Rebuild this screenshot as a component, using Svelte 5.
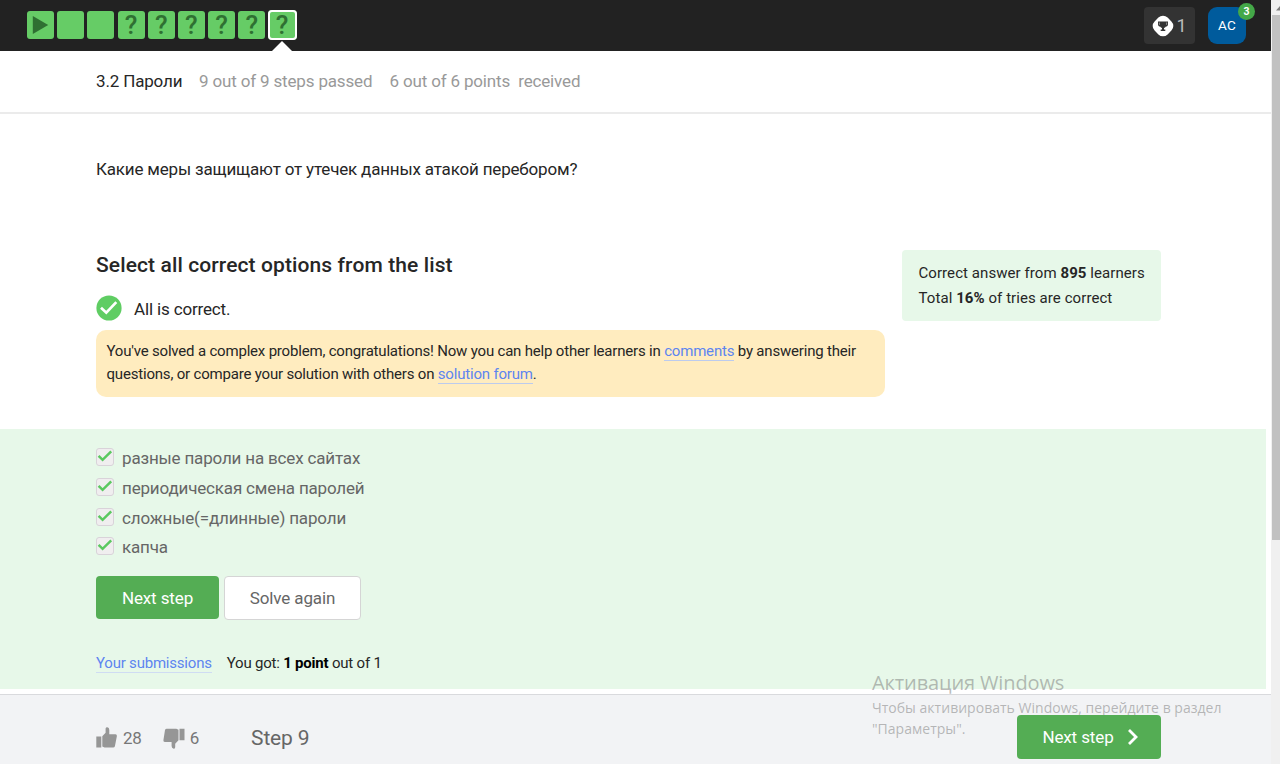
<script>
  const steps = ['play', 'text', 'text', 'quiz', 'quiz', 'quiz', 'quiz', 'quiz', 'quiz'];
  const current = 8;
  const options = [
    'разные пароли на всех сайтах',
    'периодическая смена паролей',
    'сложные(=длинные) пароли',
    'капча'
  ];
</script>

<div class="window">
  <div class="page">
    <header>
      <nav>
        {#each steps as kind, i}
          <div class="step" class:active={i === current}>
            {#if kind === 'play'}
              <svg width="17" height="20" viewBox="0 0 17 20"><path d="M.8 1 16.200 10 .8 19Z" fill="#2f7032" /></svg>
            {:else if kind === 'quiz'}
              <span>?</span>
            {/if}
          </div>
        {/each}
      </nav>
      <div class="score">
        <svg width="22" height="22" viewBox="0 0 22 22">
          <rect x="1.800" y="1.800" width="18.400" height="18.400" rx="6.500" transform="rotate(45 11 11)" fill="#fff" />
          <path d="M6 6.500h10v2.700c0 1.500-1 2.300-2.100 2.400-.5.800-1.100 1.200-1.900 1.400v1.600h1.300v1.500H8.700v-1.500H10v-1.600c-.8-.2-1.400-.6-1.900-1.400C7 11.500 6 10.700 6 9.200Z" fill="#333" />
          <path d="M6.900 7.600h.7v2.500c-.5-.1-.7-.5-.7-1Zm7.500 0h.7v1.500c0 .5-.2.900-.7 1Z" fill="#bbb" />
        </svg>
        <span>1</span>
      </div>
      <div class="avatar">AC<b>3</b></div>
    </header>

    <div class="lesson">
      <span class="title">3.2 Пароли</span>
      <span class="passed">9 out of 9 steps passed</span>
      <span class="points">6 out of 6 points&nbsp; received</span>
    </div>

    <main>
      <p class="question">Какие меры защищают от утечек данных атакой перебором?</p>
      <div class="columns">
        <section>
          <h2>Select all correct options from the list</h2>
          <div class="verdict">
            <svg width="26" height="26" viewBox="0 0 26 26">
              <circle cx="13" cy="13" r="12.600" fill="#5fcd63" />
              <path d="m5 12.700 5.300 5L20.300 7.100" fill="none" stroke="#fff" stroke-width="2.700" />
            </svg>
            <span>All is correct.</span>
          </div>
          <div class="notice">
            <div>You've solved a complex problem, congratulations! Now you can help other learners in <a href="#comments">comments</a> by answering their</div>
            <div>questions, or compare your solution with others on <a href="#forum">solution forum</a>.</div>
          </div>
        </section>
        <aside>
          <div>Correct answer from <b>895</b> learners</div>
          <div>Total <b>16%</b> of tries are correct</div>
        </aside>
      </div>
    </main>

    <div class="attempt">
      <ul>
        {#each options as option}
          <li>
            <i><svg width="16" height="16" viewBox="0 0 16 16"><path d="m1.600 6.800 4 4L14.200 2.300" fill="none" stroke="#5bc860" stroke-width="2.500" /></svg></i>
            <span>{option}</span>
          </li>
        {/each}
      </ul>
      <div class="actions">
        <button class="primary"><span>Next step</span></button>
        <button class="plain"><span>Solve again</span></button>
      </div>
      <div class="result">
        <a href="#submissions">Your submissions</a>
        <span>You got: <b>1 point</b> out of 1</span>
      </div>
    </div>

    <footer>
      <svg class="up" width="21" height="22" viewBox="0 0 21 22"><path d="M.3 9.600h5V20.600h-5ZM6.300 9.300 9.600 5.800V1.500Q9.800.2 11.300.3q2 .3 2 2.600v4.400h6.200q1.500.2 1.400 1.600l-2 10.400q-.4 1.300-1.800 1.300H8.500l-2.200-1.100Z" fill="#969696" /></svg>
      <span class="count">28</span>
      <svg class="down" width="22" height="22" viewBox="0 0 22 22"><path d="M21.500 1.800h-5v11.400h5ZM15.500 13.200l-3.300 3.500v3.500q-.2 1.500-1.600 1.500-2-.3-2-2.600V15H1.800Q.2 14.700.4 13.200L2 3q.4-1.200 1.800-1.200h9.500l2.200.9Z" fill="#969696" /></svg>
      <span class="count six">6</span>
      <span class="number">Step 9</span>
      <button class="primary next"><span>Next step</span>
        <svg width="12" height="18" viewBox="0 0 12 18"><path d="m2 2 7 7-7 7" fill="none" stroke="#fff" stroke-width="2.800" /></svg>
      </button>
    </footer>
  </div>
  <div class="scrollbar">
    <svg width="9" height="15" viewBox="0 0 9 15"><path d="M5 10.500 9 6v4.500Z" fill="#7e7e7e" /></svg>
    <div class="thumb"></div>
  </div>
  <div class="watermark">
    <div class="w1">Активация Windows</div>
    <div class="w2">Чтобы активировать Windows, перейдите в раздел</div>
    <div class="w2">"Параметры".</div>
  </div>
</div>

<style>
  :global(body) { margin: 0; overflow: hidden; background: #fff; }
  .window { position: relative; display: flex; width: 1280px; height: 764px; overflow: hidden; font-family: Roboto, sans-serif; color: #262626; }
  .window * { box-sizing: border-box; }
  .page { width: 1271px; display: flex; flex-direction: column; white-space: nowrap; }
  .scrollbar { width: 9px; background: #f0f0f0; }
  .scrollbar svg { display: block; }
  .thumb { height: 525px; margin-left: 1px; background: #c1c1c1; }

  header { flex: none; height: 51px; background: #222; display: flex; align-items: flex-start; padding: 7px 25px 0 27px; }
  nav { display: flex; gap: 3.200px; margin: 4px auto 0 0; }
  .step { position: relative; width: 27px; height: 28px; border-radius: 3px; background: #66cc66; display: flex; align-items: center; justify-content: center; }
  .step span { font-size: 26px; line-height: 28px; font-weight: 500; color: #2f7032; }
  .step.active { box-shadow: inset 0 0 0 2px #fff; width: 29px; height: 30px; margin: -1px; border-radius: 4px; }
  .step.active::after { content: ''; position: absolute; left: 4px; top: 31px; border: solid transparent; border-width: 0 10.500px 10px; border-bottom-color: #fff; }
  .score { width: 51px; height: 37px; border-radius: 4px; background: #333; color: #bbb; display: flex; align-items: center; padding-left: 7.500px; gap: 3px; font-size: 18px; }
  .score span { margin-top: -1px; }
  .avatar { position: relative; width: 38px; height: 37px; margin-left: 13px; border-radius: 9px; background: #005b9c; color: #fff; font-size: 13.500px; line-height: 37px; text-align: center; letter-spacing: .3px; }
  .avatar b { position: absolute; left: 30px; top: -4px; width: 17px; height: 17px; border-radius: 9px; background: #44a848; font-size: 10.500px; line-height: 17px; letter-spacing: 0; }

  .lesson { flex: none; height: 63px; border-bottom: 2px solid #ebebeb; padding: 0 0 2px 96px; display: flex; align-items: center; font-size: 17px; letter-spacing: -.16px; color: #999; }
  .title { color: #262626; width: 103px; }
  .passed { width: 190.500px; }

  main { flex: none; height: 315px; padding-left: 96px; }
  .question { margin: 43px 0 0; font-size: 17px; line-height: 24px; letter-spacing: -.18px; }
  .columns { display: flex; gap: 17px; margin-top: 69px; }
  section { width: 789px; }
  h2 { margin: 3px 0 0; font-size: 21px; line-height: 24px; font-weight: 500; letter-spacing: .11px; }
  .verdict { display: flex; align-items: center; gap: 12px; height: 26px; margin-top: 18px; font-size: 17px; letter-spacing: -.15px; }
  .verdict span { padding-top: 1px; }
  .notice { margin-top: 9px; height: 67px; padding: 10px 10.500px; border-radius: 10px; background: #ffecbf; font-size: 15px; line-height: 23.200px; letter-spacing: -.19px; }
  a { color: #5d85f0; text-decoration: none; border-bottom: 1px solid #bccbee; }
  aside { width: 259px; height: 71px; padding: 11px 16.500px; border-radius: 4px; background: #e7f8e9; font-size: 15px; line-height: 25.200px; letter-spacing: .07px; }
  b { font-weight: 700; }

  .attempt { flex: none; width: 1266px; height: 260px; padding: 14px 0 0 96px; background: #e7f8e9; }
  ul { list-style: none; margin: 0; padding: 0; }
  li { display: flex; height: 29.800px; gap: 8px; font-size: 17px; line-height: 30px; letter-spacing: -.17px; color: #666; }
  i { display: block; width: 18px; height: 18px; margin-top: 5px; border: 1px solid #d9d3d9; border-radius: 3px; background: #f0eeef; }
  i svg { display: block; }
  .actions { display: flex; gap: 5px; margin-top: 14px; }
  button { height: 43px; border: 0; border-radius: 4px; font: 17px Roboto, sans-serif; letter-spacing: -.12px; padding: 0; }
  .primary { width: 123px; background: #54ad54; color: #fff; }
  .plain { width: 137px; height: 44px; border: 1px solid #d5d5d5; background: #fff; color: #666; }
  .result { display: flex; align-items: flex-start; gap: 15px; margin-top: 33px; font-size: 15px; line-height: 20px; letter-spacing: -.21px; }
  .result a { height: 20px; border-color: #cfdcf3; }
  .result b { color: #000; }

  footer { flex: 1; margin-top: 5px; border-top: 1px solid #d9dadd; background: #f2f3f5; display: flex; align-items: flex-start; padding: 20px 110px 0 96px; color: #777; }
  footer svg { flex: none; }
  .up { margin-top: 12px; }
  .down { margin: 12px 0 0 21px; }
  .count { font-size: 17px; line-height: 20px; letter-spacing: -.2px; margin: 13px 0 0 6px; }
  .six { margin-left: 5px; }
  .number { font-size: 21px; line-height: 24px; letter-spacing: -.15px; margin: 11px auto 0 52px; color: #666; }
  .next { position: relative; z-index: 1; width: 144px; height: 44px; display: flex; align-items: center; justify-content: center; gap: 13px; padding-left: 3px; }

  .watermark { position: absolute; left: 872px; top: 669px; font-family: "Open Sans", "Noto Sans", sans-serif; color: rgba(120, 120, 120, .5); white-space: nowrap; pointer-events: none; }
  .w1 { font-size: 20px; line-height: 28px; letter-spacing: -.12px; }
  .w2 { font-size: 14px; line-height: 21px; letter-spacing: .02px; }
</style>
